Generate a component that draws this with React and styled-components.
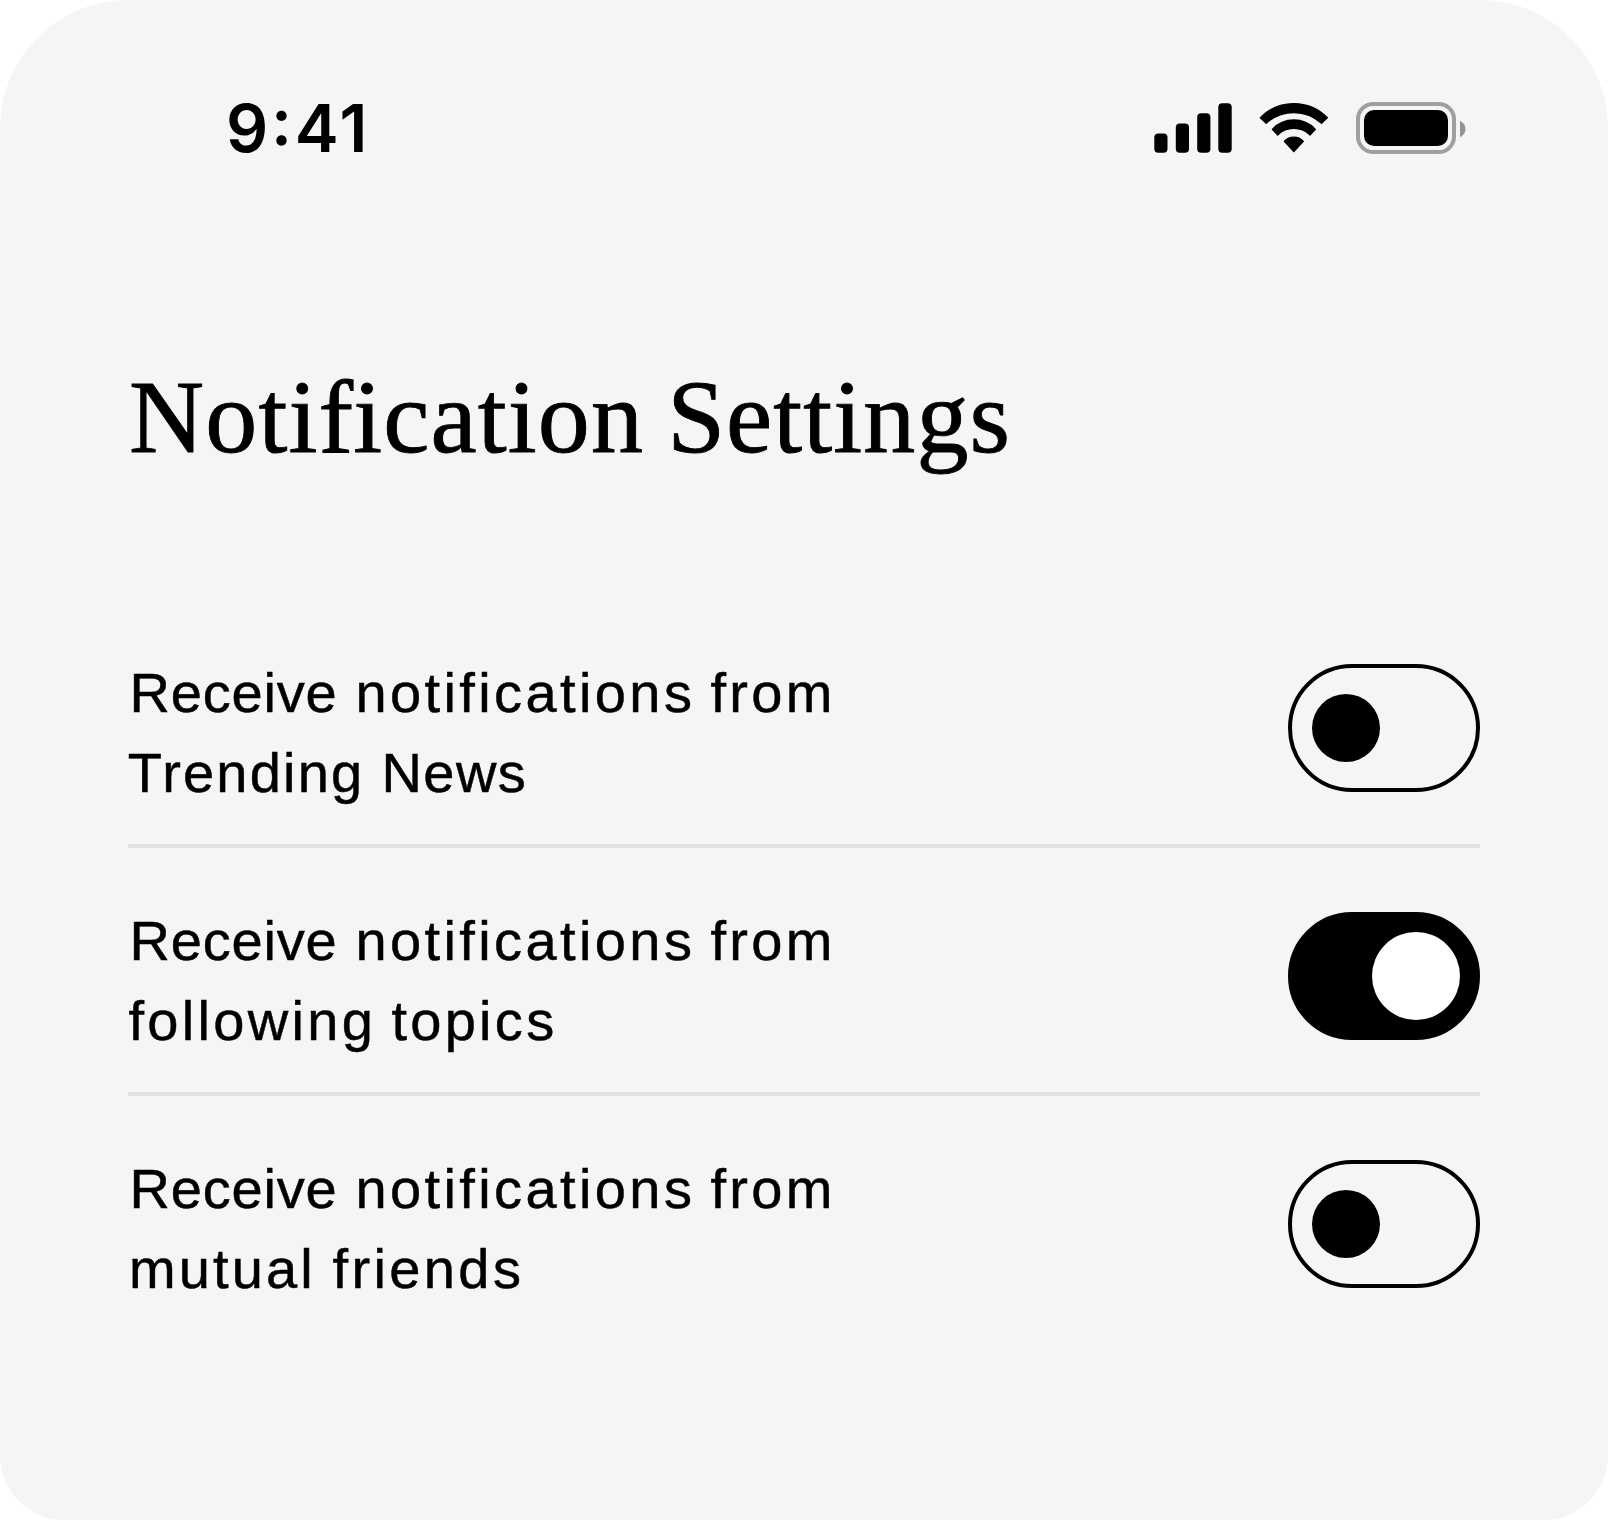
import React, { useState } from "react";
import styled, { createGlobalStyle } from "styled-components";

const GlobalStyle = createGlobalStyle`
  *, *::before, *::after { box-sizing: border-box; }
  body { margin: 0; background: #fff; }
`;

const Card = styled.main`
  display: flex;
  flex-direction: column;
  width: 1608px;
  height: 1520px;
  overflow: hidden;
  color: #000;
  background: #f5f5f5;
  border-radius: 128px 128px 64px 64px;
`;

const StatusBar = styled.header`
  display: flex;
  align-items: center;
  justify-content: space-between;
  height: 256px;
  padding: 0 142px 0 226px;
`;

const Clock = styled.time`
  font: 600 66px/80px Inter, "Liberation Sans", sans-serif;
  font-feature-settings: "calt" 1, "case" 1;
  letter-spacing: 2.8px;
`;

const StatusIcons = styled.div`
  display: flex;
  align-items: center;
  height: 52px;

  svg { display: block; }
`;

const IconSlot = styled.span`
  margin-right: ${(p) => p.$gap}px;
`;

const Title = styled.h1`
  height: 120px;
  margin: 101px 128px 123px;
  padding-left: 1px;
  font: 400 104px/120px "Liberation Serif", "Times New Roman", serif;
  -webkit-text-stroke: 0.9px #000;
  word-spacing: -3px;
  white-space: nowrap;
`;

const TitlePart = styled.span`
  letter-spacing: ${(p) => p.$track}px;
`;

const Ligature = styled.span`
  margin-right: 1.1px;
  letter-spacing: 0;
  font-variant-ligatures: common-ligatures;
`;

const List = styled.ul`
  margin: 0 128px;
  padding: 0;
  list-style: none;
`;

const Row = styled.li`
  display: flex;
  align-items: center;
  justify-content: space-between;
  height: 248px;
  padding: 48px 0 36px;
  border-bottom: 4px solid #e2e2e2;

  &:last-child { border-bottom-color: transparent; }
`;

const Label = styled.div`
  align-self: flex-start;
  padding-top: 5px;
  font: 400 56px/80px "Liberation Sans", Arial, sans-serif;
  -webkit-text-stroke: 0.5px #000;
  white-space: nowrap;
`;

const Line = styled.div`
  height: 80px;
`;

const Word = styled.span`
  margin-left: ${(p) => p.$lead}px;
  letter-spacing: ${(p) => p.$track}px;
`;

const Switch = styled.button`
  display: flex;
  align-items: center;
  justify-content: ${(p) => (p.$on ? "flex-end" : "flex-start")};
  width: 192px;
  height: 128px;
  padding: ${(p) => (p.$on ? "0 16px" : "0 20px")};
  background: ${(p) => (p.$on ? "#000" : "transparent")};
  border: 4px solid #000;
  border-radius: 64px;
  cursor: pointer;
`;

const Knob = styled.span`
  width: ${(p) => (p.$on ? 88 : 68)}px;
  height: ${(p) => (p.$on ? 88 : 68)}px;
  background: ${(p) => (p.$on ? "#fff" : "#000")};
  border-radius: 50%;
`;

const Signal = () => (
  <svg width="80" height="52" viewBox="0 0 80 52">
    <rect x="0.3" y="31.5" width="13.2" height="19.3" rx="4" />
    <rect x="21.8" y="21.6" width="13.2" height="29.2" rx="4" />
    <rect x="43.2" y="11.2" width="13.2" height="39.6" rx="4" />
    <rect x="64.3" y="1.2" width="13.4" height="49.6" rx="4" />
  </svg>
);

const Wifi = () => (
  <svg width="72" height="52" viewBox="0 0 216 156">
    <g stroke="#000" strokeWidth="4" strokeLinejoin="round">
      <path d="M7 47 A140.6 140.6 0 0 1 208 47 L190.5 64 A122 122 0 0 0 24.5 64 Z" />
      <path d="M43 82 A88.5 88.5 0 0 1 172 82 L156 99 A69.6 69.6 0 0 0 59 99 Z" />
      <path d="M79 118 A39 39 0 0 1 136 118 L107.5 149 Z" />
    </g>
  </svg>
);

const Battery = () => (
  <svg width="110" height="52" viewBox="0 0 110 52">
    <rect x="2" y="2" width="96" height="48" rx="15.2" fill="none" stroke="#000" strokeWidth="4" opacity="0.35" />
    <rect x="8" y="8" width="84" height="36" rx="10" />
    <path d="M104 19 C107.3 20.4 109.5 23.5 109.5 27 C109.5 30.5 107.3 33.7 104 35.2 Z" opacity="0.4" />
  </svg>
);

const firstLine = [
  { text: "Receive", lead: 1.5, track: 0.8 },
  { text: "notifications", lead: 2.4, track: 3.4 },
  { text: "from", lead: -0.4, track: 3.3 },
];

const settings = [
  {
    id: "trending",
    on: false,
    lines: [firstLine, [
      { text: "Trending", lead: -0.2, track: 2.2 },
      { text: "News", lead: 1.6, track: 1.4 },
    ]],
  },
  {
    id: "topics",
    on: true,
    lines: [firstLine, [
      { text: "following", lead: 0.5, track: 3.3 },
      { text: "topics", lead: -0.3, track: 3.3 },
    ]],
  },
  {
    id: "friends",
    on: false,
    lines: [firstLine, [
      { text: "mutual", lead: 1, track: 3.1 },
      { text: "friends", lead: 1.2, track: 3.4 },
    ]],
  },
];

function SettingRow({ id, lines, on }) {
  const [checked, setChecked] = useState(on);
  return (
    <Row>
      <Label id={id}>
        {lines.map((words, i) => (
          <Line key={i}>
            {words.map((w, j) => (
              <React.Fragment key={w.text}>
                {j > 0 && " "}
                <Word $lead={w.lead} $track={w.track}>{w.text}</Word>
              </React.Fragment>
            ))}
          </Line>
        ))}
      </Label>
      <Switch
        type="button"
        role="switch"
        aria-checked={checked}
        aria-labelledby={id}
        $on={checked}
        onClick={() => setChecked(!checked)}
      >
        <Knob $on={checked} />
      </Switch>
    </Row>
  );
}

export default function App() {
  return (
    <>
      <GlobalStyle />
      <Card>
        <StatusBar>
          <Clock>9:41</Clock>
          <StatusIcons>
            <IconSlot $gap={23.5}><Signal /></IconSlot>
            <IconSlot $gap={26.5}><Wifi /></IconSlot>
            <IconSlot $gap={0}><Battery /></IconSlot>
          </StatusIcons>
        </StatusBar>
        <Title>
          <TitlePart $track={1.15}>Noti<Ligature>fi</Ligature>cation</TitlePart>{" "}
          <TitlePart $track={1.1}>Settings</TitlePart>
        </Title>
        <List>
          {settings.map((s) => (
            <SettingRow key={s.id} {...s} />
          ))}
        </List>
      </Card>
    </>
  );
}
